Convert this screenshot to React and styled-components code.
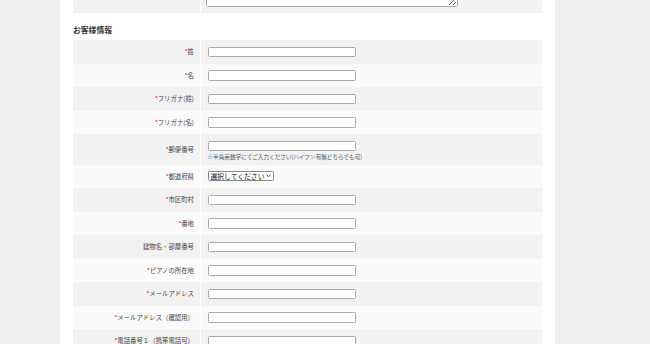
import React from "react";
import styled, { createGlobalStyle } from "styled-components";

const GlobalStyle = createGlobalStyle`
  html, body {
    margin: 0;
    padding: 0;
    background: #efefef;
    overflow: hidden;
    font-family: "Noto Sans CJK JP", "Noto Sans", sans-serif;
    color: #333;
  }
`;

const Page = styled.div`
  width: 650px;
  height: 344px;
  display: flex;
  justify-content: flex-start;
  overflow: hidden;
`;

const Content = styled.div`
  width: 495px;
  margin-left: 60px;
  background: #fff;
  padding: 0 13px;
  box-sizing: border-box;
`;

const Table = styled.div`
  display: flex;
  flex-direction: column;
`;

const Row = styled.div`
  display: grid;
  grid-template-columns: 127px 1fr;
  grid-template-rows: 100%;
  height: ${(p) => p.$h}px;
  background: ${(p) => (p.$odd ? "#f2f2f2" : "#fafafa")};
  overflow: hidden;
`;

const Label = styled.div`
  display: flex;
  align-items: center;
  justify-content: flex-end;
  padding-right: 6px;
  font-size: 6.4px;
  color: #444;
  white-space: nowrap;
`;

const Req = styled.span`
  color: #e60012;
  font-size: 6px;
`;

const Field = styled.div`
  display: flex;
  flex-direction: column;
  justify-content: ${(p) => (p.$top ? "flex-start" : "center")};
  align-items: flex-start;
  min-height: 0;
  border-left: 1.5px solid #fff;
  padding-left: 6.5px;
  padding-top: ${(p) => (p.$top ? "6.5px" : "0")};
`;

const TopField = styled(Field)`
  justify-content: flex-end;
  overflow: hidden;
  padding-left: 4.5px;
  padding-bottom: 6px;
  box-sizing: border-box;
`;

const TextArea = styled.textarea`
  width: 252px;
  height: 40px;
  border: 1px solid #a9a9a9;
  border-radius: 1.5px;
  box-sizing: border-box;
  background: #fff;
  margin: 0;
  flex-shrink: 0;
`;

const Input = styled.input`
  width: 146px;
  height: 8.5px;
  border: 1px solid #a9a9a9;
  border-radius: 1.5px;
  box-sizing: content-box;
  padding: 0;
  margin: 0;
  background: #fff;
`;

const Note = styled.div`
  font-size: 5.6px;
  color: #555;
  margin-top: 1.5px;
  white-space: nowrap;
`;

const SelectWrap = styled.div`
  position: relative;
  display: inline-flex;
`;

const Select = styled.select`
  appearance: none;
  -webkit-appearance: none;
  height: 10px;
  width: 66px;
  font-size: 6.8px;
  padding: 0 8px 0 2px;
  margin: 0;
  border: 1px solid #888;
  border-radius: 1.5px;
  background: #fff;
  color: #111;
  font-family: "Noto Sans CJK JP", sans-serif;
  line-height: 1;
  box-sizing: border-box;
`;

const Chevron = styled.svg`
  position: absolute;
  right: 2.5px;
  top: 3px;
  width: 5px;
  height: 4px;
  pointer-events: none;
`;

const Heading = styled.h3`
  margin: 0;
  height: 27px;
  display: flex;
  align-items: flex-end;
  padding-bottom: 5px;
  box-sizing: border-box;
  font-size: 7.8px;
  font-weight: 700;
  color: #333;
`;

const rows = [
  { label: "姓", req: true },
  { label: "名", req: true },
  { label: "フリガナ(姓)", req: true },
  { label: "フリガナ(名)", req: true },
  { label: "郵便番号", req: true, note: "※半角英数字にてご入力ください(ハイフン有無どちらでも可)", h: 30.5 },
  { label: "都道府県", req: true, select: true },
  { label: "市区町村", req: true },
  { label: "番地", req: true },
  { label: "建物名・部屋番号", req: false },
  { label: "ピアノの所在地", req: true },
  { label: "メールアドレス", req: true },
  { label: "メールアドレス（確認用）", req: true },
  { label: "電話番号１（携帯電話可）", req: true },
];

export default function App() {
  return (
    <>
      <GlobalStyle />
      <Page>
        <Content>
          <Row $odd $h={13}>
            <Label />
            <TopField>
              <TextArea />
            </TopField>
          </Row>
          <Heading>お客様情報</Heading>
          <Table>
            {rows.map((r, i) => (
              <Row key={r.label} $odd={i % 2 === 0} $h={r.h || 23.5}>
                <Label>
                  {r.req && <Req>*</Req>}
                  {r.label}
                </Label>
                <Field $top={!!r.note}>
                  {r.select ? (
                    <SelectWrap>
                      <Select defaultValue="">
                        <option value="">選択してください</option>
                      </Select>
                      <Chevron viewBox="0 0 5 4">
                        <path d="M0.6 0.8 L2.5 2.8 L4.4 0.8" fill="none" stroke="#222" strokeWidth="0.9" />
                      </Chevron>
                    </SelectWrap>
                  ) : (
                    <Input type="text" />
                  )}
                  {r.note && <Note>{r.note}</Note>}
                </Field>
              </Row>
            ))}
          </Table>
        </Content>
      </Page>
    </>
  );
}
